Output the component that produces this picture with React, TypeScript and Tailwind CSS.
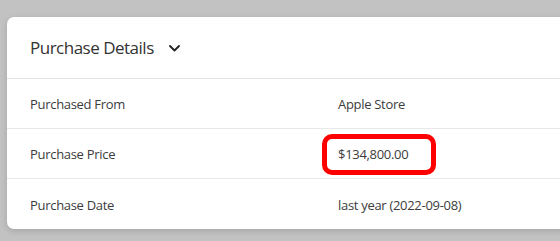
import React from "react";

export default function App() {
  const font = { fontFamily: '"Open Sans", "Noto Sans", Arial, sans-serif' };
  return (
    <div className="w-[560px] h-[241px] overflow-hidden bg-[#c2c2c2] pt-[17px] pl-[7px]" style={font}>
      <div className="w-[600px] h-[212px] bg-white rounded-l-[7px] shadow-[0_2px_6px_rgba(0,0,0,0.15)] flex flex-col">
        <div className="h-[62px] flex items-center pl-[23px] border-b border-[#e4e4e4]">
          <span className="text-[17px] text-[#333] tracking-[-0.5px] pt-[1px]">Purchase Details</span>
          <svg className="ml-[15px] mt-[1px]" width="11" height="7" viewBox="0 0 11 7" fill="none">
            <path d="M1 1 L5.5 5.5 L10 1" stroke="#222" strokeWidth="1.8" strokeLinecap="round" strokeLinejoin="round" />
          </svg>
        </div>
        <div className="h-[50px] flex items-center border-b border-[#e8e8e8] text-[13px] text-[#3c3c3c] tracking-[-0.3px] pt-[3px]">
          <span className="w-[331px] pl-[23px]">Purchased From</span>
          <span>Apple Store</span>
        </div>
        <div className="h-[50px] flex items-center border-b border-[#e8e8e8] text-[13px] text-[#3c3c3c] tracking-[-0.3px]">
          <span className="w-[331px] pl-[23px] pt-[3px]">Purchase Price</span>
          <span className="ml-[-16px] mt-[1px] h-[41px] w-[114px] flex items-center pl-[11px] pt-[2px] border-[5px] border-[#ff0000] rounded-[10px]">$134,800.00</span>
        </div>
        <div className="h-[50px] flex items-center text-[13px] text-[#3c3c3c] tracking-[-0.3px] pt-[4px]">
          <span className="w-[331px] pl-[23px]">Purchase Date</span>
          <span>last year (2022-09-08)</span>
        </div>
      </div>
    </div>
  );
}
